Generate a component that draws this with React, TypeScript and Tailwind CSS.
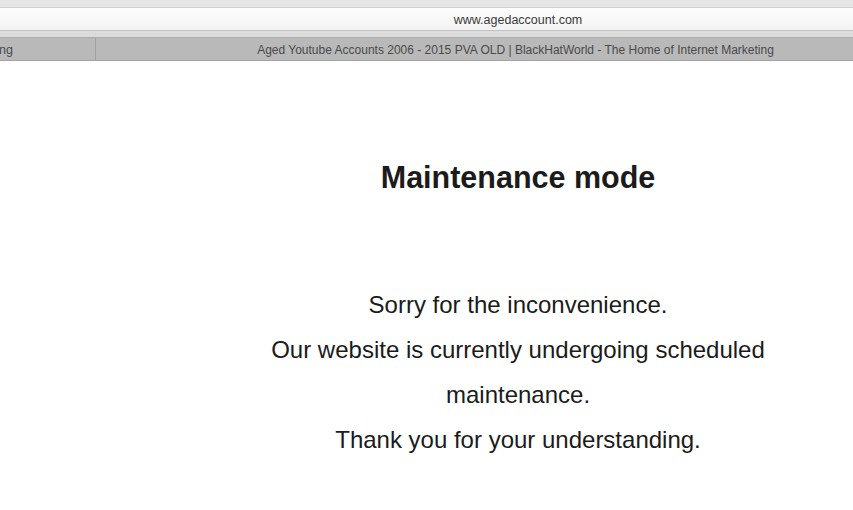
import React from 'react';

const App: React.FC = () => {
  return (
    <div className="w-[853px] h-[510px] overflow-hidden bg-white font-['Liberation_Sans',Arial,sans-serif]">
      {/* browser chrome */}
      <div className="h-[8px] bg-[#e6e6e6] border-b border-[#cfcfcf]" />
      <div className="h-[23px] bg-gradient-to-b from-[#fdfdfd] to-[#f3f3f3] border-b border-[#c2c2c2] pl-[183px] flex items-center justify-center">
        <span className="text-[12.5px] text-[#3a3a3a] leading-none pt-[2px]">www.agedaccount.com</span>
      </div>
      <div className="h-[7px] bg-[#dcdcdc] border-b border-[#adadad]" />
      <div className="h-[23px] bg-[#b9b9b9] border-b border-[#a2a2a2] flex">
        <div className="w-[96px] border-r border-[#a2a2a2] flex items-center">
          <span className="text-[12.5px] text-[#4a4a4a] leading-none -ml-[1px] pt-[2px]">ng</span>
        </div>
        <div className="flex-1 flex items-center justify-center">
          <span className="text-[12px] text-[#4a4a4a] leading-none pl-[82px] pt-[2px]">
            Aged Youtube Accounts 2006 - 2015 PVA OLD | BlackHatWorld - The Home of Internet Marketing
          </span>
        </div>
      </div>

      {/* page */}
      <div className="pl-[183px] text-[#1b1b1b]">
        <h1 className="text-center font-bold text-[30.5px] leading-none pt-[101px]">Maintenance mode</h1>
        <div className="mx-auto w-[540px] text-center text-[24px] leading-[45px] pt-[89px]">
          <p>Sorry for the inconvenience.</p>
          <p>Our website is currently undergoing scheduled maintenance.</p>
          <p>Thank you for your understanding.</p>
        </div>
      </div>
    </div>
  );
};

export default App;
